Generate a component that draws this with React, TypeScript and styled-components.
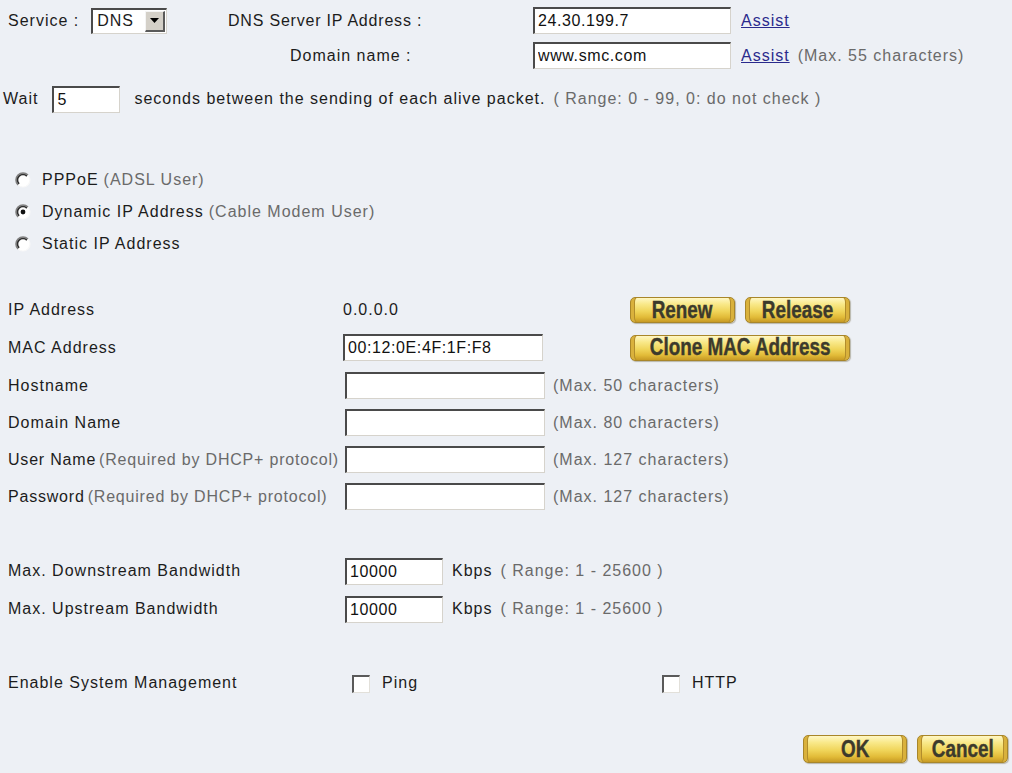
import React from 'react';
import styled, { createGlobalStyle } from 'styled-components';

const GlobalStyle = createGlobalStyle`
  html, body {
    margin: 0;
    padding: 0;
    background: #edf0f5;
  }
  body {
    font-family: "Liberation Sans", Arial, sans-serif;
    font-size: 16px;
    letter-spacing: 1px;
    color: #1c1c1c;
  }
`;

const Page = styled.div`
  width: 1012px;
  height: 773px;
  background: #edf0f5;
  overflow: hidden;
`;

const TopGrid = styled.div`
  display: grid;
  grid-template-columns: 220px 305px 208px 1fr;
  grid-auto-rows: 35px;
  padding: 3px 0 0 8px;
  align-items: center;
`;

const Cell = styled.div<{ $indent?: number; $tight?: boolean }>`
  display: flex;
  align-items: center;
  padding-left: ${({ $indent }) => $indent || 0}px;
  white-space: nowrap;
  letter-spacing: ${({ $tight }) => ($tight ? '0.8px' : 'inherit')};
`;

const Label = styled.span<{ $gap?: number }>`
  margin-right: ${({ $gap }) => $gap || 12}px;
`;

const Note = styled.span<{ $gap?: number }>`
  color: #6a6a6a;
  margin-left: ${({ $gap }) => ($gap === undefined ? 8 : $gap)}px;
`;

const Link = styled.a`
  color: #2a2a8c;
  text-decoration: underline;
  cursor: pointer;
`;

const TextBox = styled.input<{ $w: number; $shift?: number }>`
  box-sizing: border-box;
  width: ${({ $w }) => $w}px;
  height: 27px;
  margin-left: ${({ $shift }) => $shift || 0}px;
  padding: 0 3px;
  background: #ffffff;
  border-style: solid;
  border-width: 2px 1px 1px 2px;
  border-color: #4a4a4a #d6d3cc #d6d3cc #4a4a4a;
  font-family: "Liberation Sans", Arial, sans-serif;
  font-size: 16px;
  letter-spacing: 0.6px;
  color: #111;
  outline: none;
`;

const SelectBox = styled.div`
  box-sizing: border-box;
  width: 76px;
  height: 26px;
  display: flex;
  align-items: center;
  justify-content: space-between;
  background: #fff;
  border-style: solid;
  border-width: 2px 1px 1px 2px;
  border-color: #4a4a4a #d6d3cc #d6d3cc #4a4a4a;
  padding-left: 4px;
`;

const SelectArrow = styled.div`
  box-sizing: border-box;
  width: 20px;
  height: 21px;
  margin-right: 1px;
  background: #d4d0c8;
  border-style: solid;
  border-width: 1px 2px 2px 1px;
  border-color: #f4f4f4 #5a5a5a #5a5a5a #f4f4f4;
  display: flex;
  align-items: center;
  justify-content: center;
`;

const WaitRow = styled.div`
  height: 52px;
  display: flex;
  align-items: center;
  padding-left: 3px;
  white-space: nowrap;
`;

const WaitText = styled.span`
  margin-left: 14px;
`;

const RadioGroup = styled.div`
  margin-top: 39px;
  padding-left: 15px;
`;

const RadioRow = styled.label`
  height: 32px;
  display: flex;
  align-items: center;
  gap: 11px;
`;

const InfoGrid = styled.div`
  margin-top: 32px;
  display: grid;
  grid-template-columns: 335px 287px 1fr;
  grid-template-rows: 36px 39px 37px 37px 37px 37px;
  padding-left: 8px;
  align-items: center;
`;

const BandGrid = styled.div`
  margin-top: 37px;
  display: grid;
  grid-template-columns: 337px 1fr;
  grid-auto-rows: 38px;
  padding-left: 8px;
  align-items: center;
`;

const Unit = styled.span`
  margin-left: 9px;
`;

const EnableRow = styled.div`
  margin-top: 36px;
  height: 38px;
  display: grid;
  grid-template-columns: 344px 310px 1fr;
  padding-left: 8px;
  align-items: center;
`;

const CheckLabel = styled.label`
  display: flex;
  align-items: center;
  gap: 12px;
`;

const CheckBox = styled.span`
  box-sizing: border-box;
  width: 18px;
  height: 18px;
  background: #fff;
  border-style: solid;
  border-width: 2px 1px 1px 2px;
  border-color: #5a5a5a #e2e0da #e2e0da #5a5a5a;
  margin-top: 2px;
`;

const ButtonGroup = styled.div`
  display: flex;
  gap: 10px;
`;

const Footer = styled.div`
  margin-top: 33px;
  display: flex;
  justify-content: flex-end;
  padding-right: 4px;
`;

const GoldButton = styled.button<{ $w: number; $h?: number }>`
  box-sizing: border-box;
  width: ${({ $w }) => $w}px;
  height: ${({ $h }) => $h || 26}px;
  padding: 0;
  display: flex;
  align-items: center;
  justify-content: center;
  overflow: hidden;
  border: 1px solid #a8862a;
  border-radius: 5px;
  background: linear-gradient(
    180deg,
    #fff7c4 0%,
    #f9e98a 25%,
    #f0d55a 55%,
    #e2bb38 80%,
    #c79a24 100%
  );
  box-shadow:
    inset 5px 0 0 -2px #d9b13c,
    inset -5px 0 0 -2px #d9b13c,
    inset 6px 0 0 -2px #b28d2c,
    inset -6px 0 0 -2px #b28d2c,
    1px 1px 1px rgba(120, 110, 80, 0.45);
  cursor: pointer;
`;

const ButtonText = styled.span`
  display: inline-block;
  white-space: nowrap;
  font-family: "Liberation Sans", Arial, sans-serif;
  font-weight: bold;
  font-size: 23px;
  letter-spacing: 0;
  line-height: 1;
  color: #3c3a2c;
  transform: scaleX(0.82);
  -webkit-text-stroke: 0.4px #3c3a2c;
`;

const Radio: React.FC<{ checked?: boolean }> = ({ checked }) => (
  <svg width="16" height="16" viewBox="0 0 16 16">
    <circle cx="8" cy="8" r="7" fill="#fff" />
    <path d="M3.05 12.95 A7 7 0 0 1 12.95 3.05" stroke="#808080" strokeWidth="1.6" fill="none" />
    <path d="M4.1 11.9 A5.5 5.5 0 0 1 11.9 4.1" stroke="#2e2e2e" strokeWidth="1.6" fill="none" />
    <path d="M12.95 3.05 A7 7 0 0 1 3.05 12.95" stroke="#f8f8f8" strokeWidth="1.2" fill="none" />
    {checked && <circle cx="8" cy="8" r="2.4" fill="#111" />}
  </svg>
);

const Gold: React.FC<{ w: number; h?: number; children: React.ReactNode }> = ({ w, h, children }) => (
  <GoldButton $w={w} $h={h}>
    <ButtonText>{children}</ButtonText>
  </GoldButton>
);

const App: React.FC = () => {
  return (
    <Page>
      <GlobalStyle />
      <TopGrid>
        <Cell>
          <Label>Service :</Label>
          <SelectBox>
            <span>DNS</span>
            <SelectArrow>
              <svg width="9" height="5" viewBox="0 0 9 5">
                <path d="M0 0 H9 L4.5 5 Z" fill="#000" />
              </svg>
            </SelectArrow>
          </SelectBox>
        </Cell>
        <Cell $tight>DNS Server IP Address :</Cell>
        <Cell>
          <TextBox $w={198} defaultValue="24.30.199.7" />
        </Cell>
        <Cell>
          <Link>Assist</Link>
        </Cell>

        <Cell />
        <Cell $indent={62}>Domain name :</Cell>
        <Cell>
          <TextBox $w={198} defaultValue="www.smc.com" />
        </Cell>
        <Cell>
          <Link>Assist</Link>
          <Note>(Max. 55 characters)</Note>
        </Cell>
      </TopGrid>

      <WaitRow>
        <Label $gap={14}>Wait</Label>
        <TextBox $w={68} defaultValue="5" />
        <WaitText>seconds between the sending of each alive packet.</WaitText>
        <Note>( Range: 0 - 99, 0: do not check )</Note>
      </WaitRow>

      <RadioGroup>
        <RadioRow>
          <Radio />
          <span>
            PPPoE<Note $gap={5}>(ADSL User)</Note>
          </span>
        </RadioRow>
        <RadioRow>
          <Radio checked />
          <span>
            Dynamic IP Address<Note $gap={5}>(Cable Modem User)</Note>
          </span>
        </RadioRow>
        <RadioRow>
          <Radio />
          <span>Static IP Address</span>
        </RadioRow>
      </RadioGroup>

      <InfoGrid>
        <Cell>IP Address</Cell>
        <Cell>0.0.0.0</Cell>
        <ButtonGroup>
          <Gold w={105}>Renew</Gold>
          <Gold w={105}>Release</Gold>
        </ButtonGroup>

        <Cell>MAC Address</Cell>
        <Cell>
          <TextBox $w={200} defaultValue="00:12:0E:4F:1F:F8" />
        </Cell>
        <ButtonGroup>
          <Gold w={220}>Clone MAC Address</Gold>
        </ButtonGroup>

        <Cell>Hostname</Cell>
        <Cell>
          <TextBox $w={200} $shift={2} />
          <Note>(Max. 50 characters)</Note>
        </Cell>
        <Cell />

        <Cell>Domain Name</Cell>
        <Cell>
          <TextBox $w={200} $shift={2} />
          <Note>(Max. 80 characters)</Note>
        </Cell>
        <Cell />

        <Cell $tight>
          User Name<Note $gap={3}>(Required by DHCP+ protocol)</Note>
        </Cell>
        <Cell>
          <TextBox $w={200} $shift={2} />
          <Note>(Max. 127 characters)</Note>
        </Cell>
        <Cell />

        <Cell $tight>
          Password<Note $gap={3}>(Required by DHCP+ protocol)</Note>
        </Cell>
        <Cell>
          <TextBox $w={200} $shift={2} type="text" />
          <Note>(Max. 127 characters)</Note>
        </Cell>
        <Cell />
      </InfoGrid>

      <BandGrid>
        <Cell>Max. Downstream Bandwidth</Cell>
        <Cell>
          <TextBox $w={98} defaultValue="10000" />
          <Unit>Kbps</Unit>
          <Note>( Range: 1 - 25600 )</Note>
        </Cell>
        <Cell>Max. Upstream Bandwidth</Cell>
        <Cell>
          <TextBox $w={98} defaultValue="10000" />
          <Unit>Kbps</Unit>
          <Note>( Range: 1 - 25600 )</Note>
        </Cell>
      </BandGrid>

      <EnableRow>
        <Cell>Enable System Management</Cell>
        <CheckLabel>
          <CheckBox />
          <span>Ping</span>
        </CheckLabel>
        <CheckLabel>
          <CheckBox />
          <span>HTTP</span>
        </CheckLabel>
      </EnableRow>

      <Footer>
        <ButtonGroup>
          <Gold w={104} h={28}>OK</Gold>
          <Gold w={91} h={28}>Cancel</Gold>
        </ButtonGroup>
      </Footer>
    </Page>
  );
};

export default App;
